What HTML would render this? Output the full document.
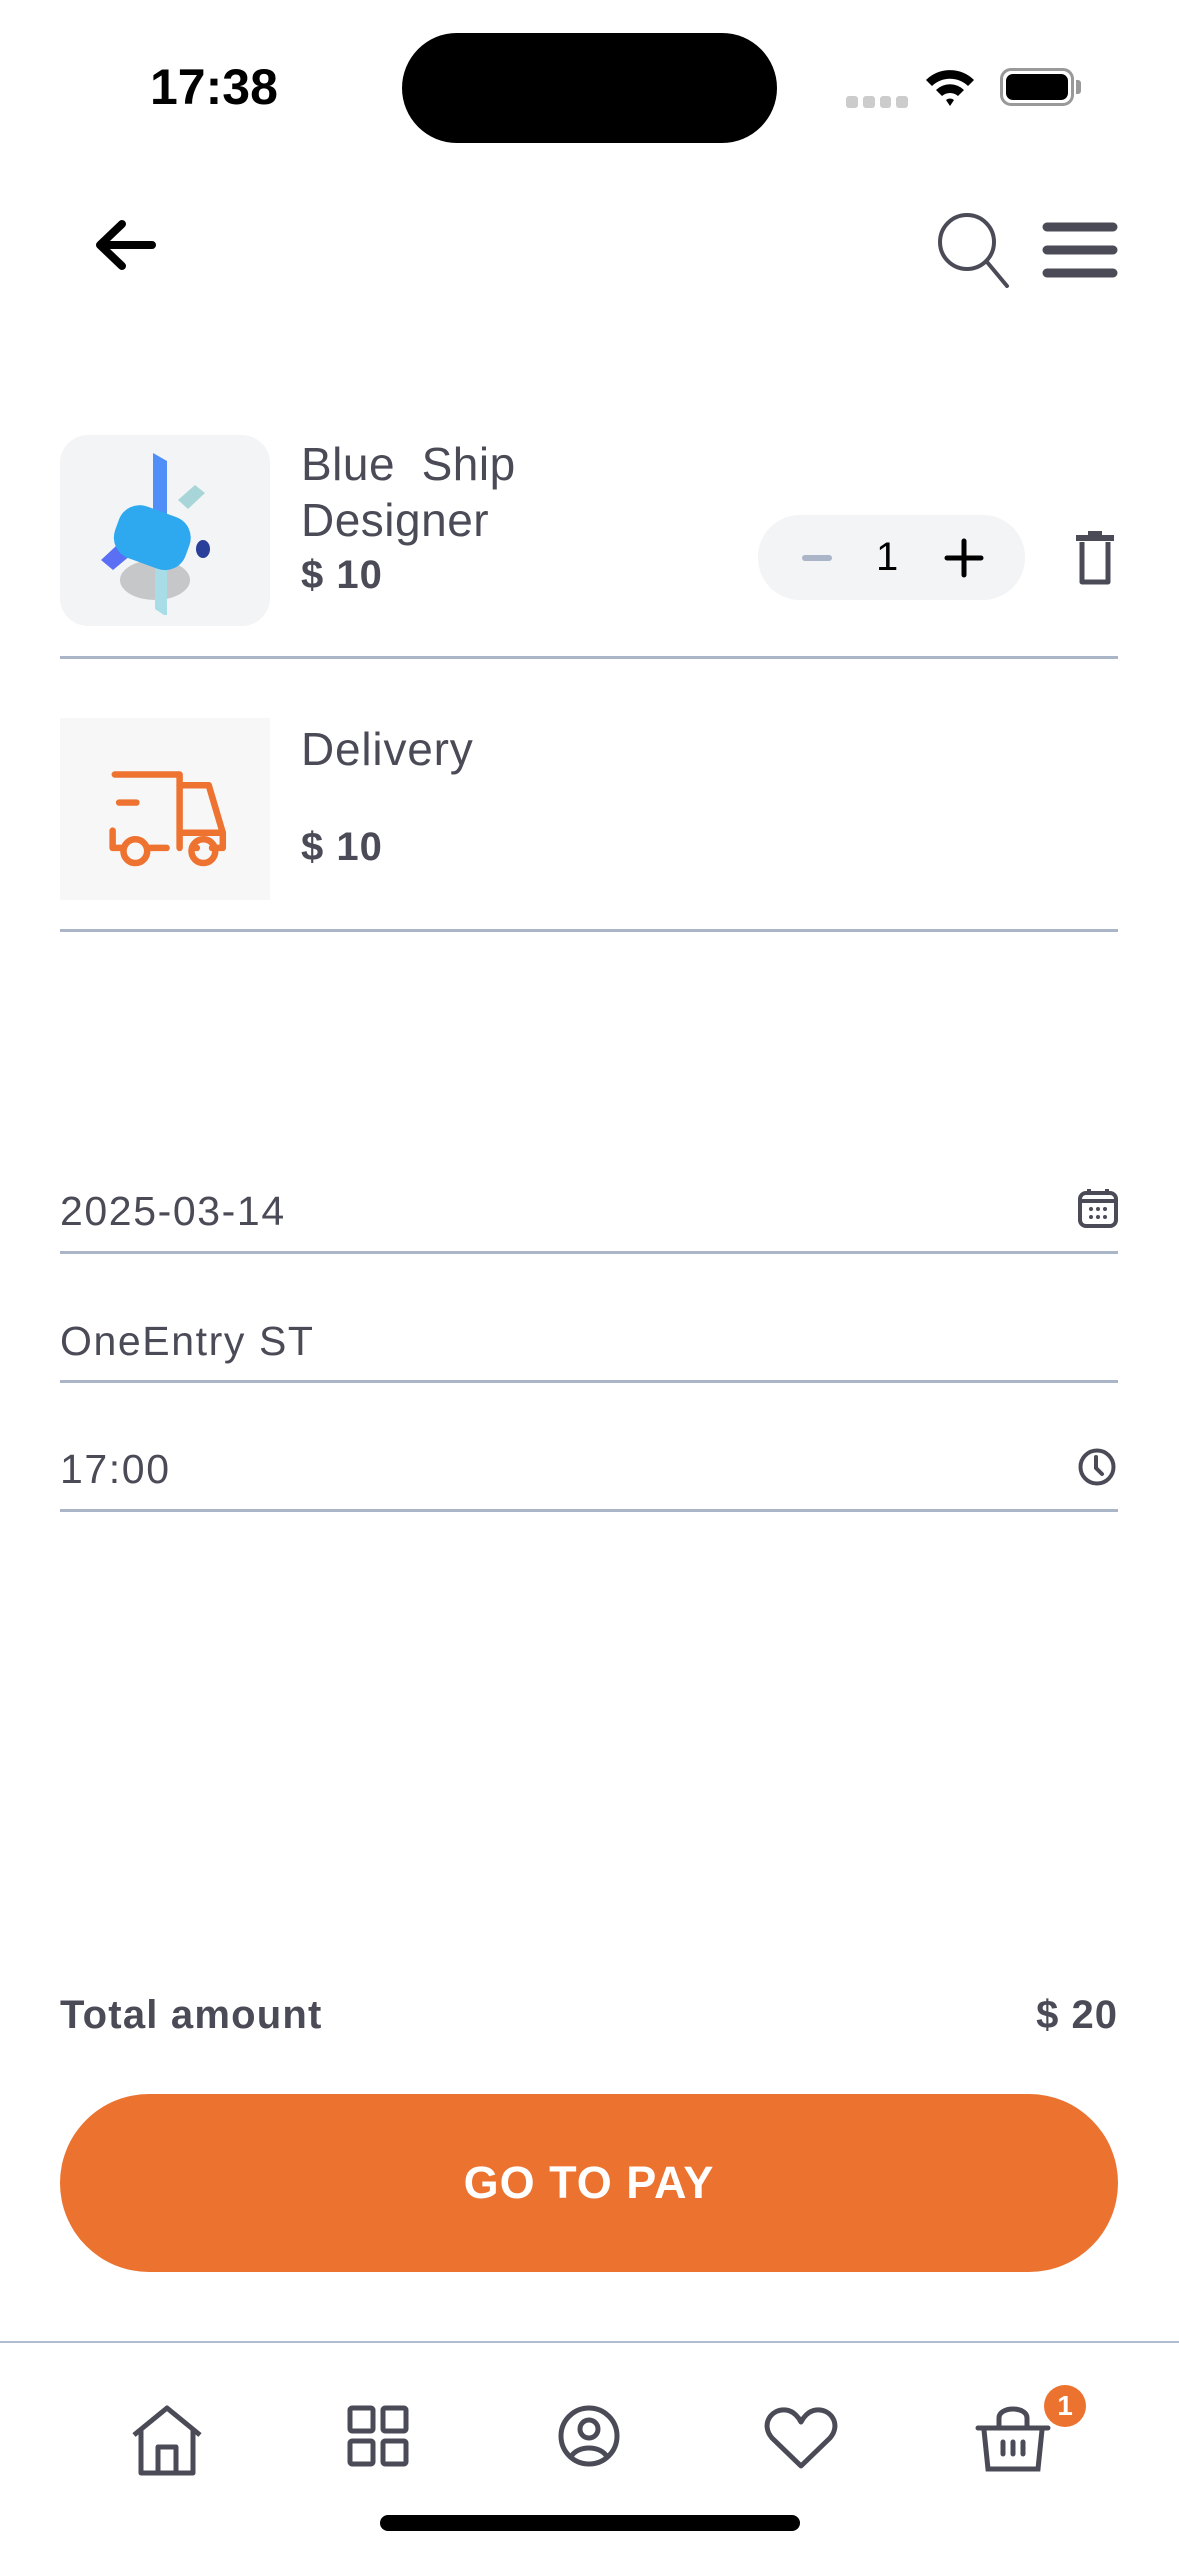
<!DOCTYPE html>
<html><head><meta charset="utf-8"><style>
*{margin:0;padding:0;box-sizing:border-box}
body{width:1179px;height:2556px;background:#fff;position:relative;overflow:hidden;font-family:"Liberation Sans",sans-serif;color:#4b4b57}
.a{position:absolute}
.line{position:absolute;left:60px;width:1058px;height:3px;background:#aab5c8}
.t{position:absolute;white-space:nowrap}
.f{font-size:41px;letter-spacing:1.6px}
</style></head><body>
<!-- status bar -->
<div class="t" style="left:150px;top:58px;font-size:50px;font-weight:bold;color:#000">17:38</div>
<div class="a" style="left:402px;top:33px;width:375px;height:110px;background:#000;border-radius:55px"></div>
<div class="a" style="left:846px;top:96px;width:62px;height:12px;display:flex;gap:5px"><i style="flex:1;background:#ccc;border-radius:3px"></i><i style="flex:1;background:#ccc;border-radius:3px"></i><i style="flex:1;background:#ccc;border-radius:3px"></i><i style="flex:1;background:#ccc;border-radius:3px"></i></div>
<svg class="a" style="left:924px;top:66px" width="52" height="42" viewBox="0 0 52 42"><path d="M2 14 A34 34 0 0 1 50 14 L44 20 A26 26 0 0 0 8 20Z M12 24 A20 20 0 0 1 40 24 L34 30 A12 12 0 0 0 18 30Z M22 34 A6 6 0 0 1 30 34 L26 40Z" fill="#000"/></svg>
<div class="a" style="left:1000px;top:68px;width:74px;height:38px;border:3px solid #999;border-radius:11px;padding:3px"><div style="width:100%;height:100%;background:#000;border-radius:7px"></div></div>
<div class="a" style="left:1076px;top:80px;width:5px;height:14px;background:#999;border-radius:0 3px 3px 0"></div>
<!-- header -->
<svg class="a" style="left:92px;top:218px" width="68" height="54" viewBox="0 0 68 54"><path d="M60 27H10M30 6L8 27L30 48" stroke="#000" stroke-width="8" fill="none" stroke-linecap="round" stroke-linejoin="round"/></svg>
<svg class="a" style="left:935px;top:210px" width="76" height="78" viewBox="0 0 76 78"><circle cx="32" cy="32" r="27" stroke="#4b4b57" stroke-width="4" fill="none"/><path d="M52 52L72 76" stroke="#4b4b57" stroke-width="4" stroke-linecap="round"/></svg>
<svg class="a" style="left:1042px;top:220px" width="76" height="60" viewBox="0 0 76 60"><path d="M5 7H71M5 30H71M5 53H71" stroke="#4b4b57" stroke-width="9" stroke-linecap="round"/></svg>
<!-- product -->
<div class="a" style="left:60px;top:435px;width:210px;height:191px;background:#f3f4f6;border-radius:28px"></div>
<svg class="a" style="left:95px;top:445px" width="140" height="170" viewBox="0 0 140 170"><ellipse cx="60" cy="135" rx="35" ry="20" fill="#999" opacity=".5"/><path d="M58 8L72 16V92L58 84Z" fill="#4f8ff7"/><path d="M60 100L72 106V172L60 164Z" fill="#a8dde8"/><path d="M83 55L100 40L110 48L93 64Z" fill="#a8d6d8"/><path d="M6 115L35 88L48 100L18 125Z" fill="#5b6ff5"/><rect x="20" y="65" width="75" height="55" rx="22" fill="#2ea8ef" transform="rotate(20 57 92)"/><ellipse cx="108" cy="104" rx="7" ry="9" fill="#2a3f9a"/></svg>
<div class="t" style="left:301px;top:436px;font-size:46px;line-height:56px;letter-spacing:.5px">Blue&nbsp; Ship<br>Designer</div>
<div class="t" style="left:301px;top:553px;font-size:40px;font-weight:bold;letter-spacing:1px">$ 10</div>
<div class="a" style="left:758px;top:515px;width:267px;height:85px;background:#f3f4f6;border-radius:42px"></div>
<div class="a" style="left:802px;top:555px;width:30px;height:6px;background:#aab5c8;border-radius:3px"></div>
<div class="t" style="left:876px;top:535px;font-size:40px;color:#000">1</div>
<svg class="a" style="left:944px;top:538px" width="40" height="40" viewBox="0 0 40 40"><path d="M20 3V37M3 20H37" stroke="#000" stroke-width="5" stroke-linecap="round"/></svg>
<svg class="a" style="left:1074px;top:528px" width="42" height="60" viewBox="0 0 42 60"><path d="M2 10H40" stroke="#4b4b57" stroke-width="6"/><rect x="14" y="3" width="14" height="6" fill="#4b4b57"/><path d="M8 14V54H34V14" stroke="#4b4b57" stroke-width="5" fill="none" stroke-linejoin="round"/></svg>
<div class="line" style="top:656px"></div>
<!-- delivery -->
<div class="a" style="left:60px;top:718px;width:210px;height:182px;background:#f7f7f7"></div>
<svg class="a" style="left:104px;top:768px" width="125" height="100" viewBox="0 0 125 100"><g stroke="#ee7230" stroke-width="6" fill="none" stroke-linecap="round" stroke-linejoin="round" transform="scale(1.08)"><path d="M10 6H70V74"/><path d="M70 16H97L110 60V74H100"/><path d="M70 60H110"/><path d="M14 32H30"/><path d="M8 58V74H16M40 74H58M84 74H86"/><circle cx="29" cy="77" r="11"/><circle cx="92" cy="77" r="11"/></g></svg>
<div class="t" style="left:301px;top:722px;font-size:46px;letter-spacing:.8px">Delivery</div>
<div class="t" style="left:301px;top:825px;font-size:40px;font-weight:bold;letter-spacing:1px">$ 10</div>
<div class="line" style="top:929px"></div>
<!-- fields -->
<div class="t f" style="left:60px;top:1188px">2025-03-14</div>
<svg class="a" style="left:1077px;top:1187px" width="42" height="42" viewBox="0 0 42 42"><rect x="3" y="6" width="36" height="33" rx="6" stroke="#4b4b57" stroke-width="4" fill="none"/><path d="M3 14H39M12 2V8M30 2V8" stroke="#4b4b57" stroke-width="4"/><g fill="#4b4b57"><circle cx="14" cy="22" r="2"/><circle cx="21" cy="22" r="2"/><circle cx="28" cy="22" r="2"/><circle cx="14" cy="30" r="2"/><circle cx="21" cy="30" r="2"/><circle cx="28" cy="30" r="2"/></g></svg>
<div class="line" style="top:1251px"></div>
<div class="t f" style="left:60px;top:1318px">OneEntry ST</div>
<div class="line" style="top:1380px"></div>
<div class="t f" style="left:60px;top:1446px">17:00</div>
<svg class="a" style="left:1077px;top:1447px" width="40" height="40" viewBox="0 0 40 40"><circle cx="20" cy="20" r="16.5" stroke="#4b4b57" stroke-width="4" fill="none"/><path d="M19 10V21L25 27" stroke="#4b4b57" stroke-width="4" fill="none" stroke-linecap="round"/></svg>
<div class="line" style="top:1509px"></div>
<!-- total -->
<div class="t" style="left:60px;top:1993px;font-size:40px;font-weight:bold;letter-spacing:1.2px">Total amount</div>
<div class="t" style="right:61px;top:1993px;font-size:40px;font-weight:bold;letter-spacing:1px">$ 20</div>
<div class="a" style="left:60px;top:2094px;width:1058px;height:178px;background:#ec722f;border-radius:89px;color:#fff;font-size:45px;font-weight:bold;text-align:center;line-height:178px;letter-spacing:1px">GO TO PAY</div>
<!-- nav -->
<div class="a" style="left:0;top:2341px;width:1179px;height:2px;background:#b0bccf"></div>
<svg class="a" style="left:130px;top:2405px" width="74" height="72" viewBox="0 0 74 72"><g stroke="#4b4b57" stroke-width="5" fill="none" stroke-linejoin="round"><path d="M4 30L37 3L70 30"/><path d="M11 24V68H63V24"/><path d="M28 68V42H46V68"/></g></svg>
<svg class="a" style="left:347px;top:2405px" width="62" height="62" viewBox="0 0 62 62"><g stroke="#4b4b57" stroke-width="5" fill="none"><rect x="3" y="3" width="23" height="23" rx="2"/><rect x="36" y="3" width="23" height="23" rx="2"/><rect x="3" y="36" width="23" height="23" rx="2"/><rect x="36" y="36" width="23" height="23" rx="2"/></g></svg>
<svg class="a" style="left:557px;top:2404px" width="64" height="64" viewBox="0 0 64 64"><g stroke="#4b4b57" stroke-width="5" fill="none"><circle cx="32" cy="32" r="28"/><circle cx="32" cy="25" r="9"/><path d="M14 53C20 41 44 41 50 53"/></g></svg>
<svg class="a" style="left:764px;top:2406px" width="74" height="64" viewBox="0 0 74 64"><path d="M37 60L8 32C-4 18 8 2 22 4C30 5 35 12 37 16C39 12 44 5 52 4C66 2 78 18 66 32Z" stroke="#4b4b57" stroke-width="5" fill="none" stroke-linejoin="round"/></svg>
<svg class="a" style="left:975px;top:2404px" width="76" height="68" viewBox="0 0 76 68"><g stroke="#4b4b57" stroke-width="5" fill="none" stroke-linecap="round"><path d="M24 24V14C24 2 52 2 52 14V24"/><path d="M3 24H73"/><path d="M9 26L13 65H63L67 26"/><path d="M28 38V50M38 38V50M48 38V50"/></g></svg>
<div class="a" style="left:1044px;top:2385px;width:42px;height:42px;background:#ec722f;border-radius:50%;color:#fff;font-size:28px;font-weight:bold;text-align:center;line-height:42px">1</div>
<div class="a" style="left:380px;top:2515px;width:420px;height:16px;background:#000;border-radius:8px"></div>
</body></html>
